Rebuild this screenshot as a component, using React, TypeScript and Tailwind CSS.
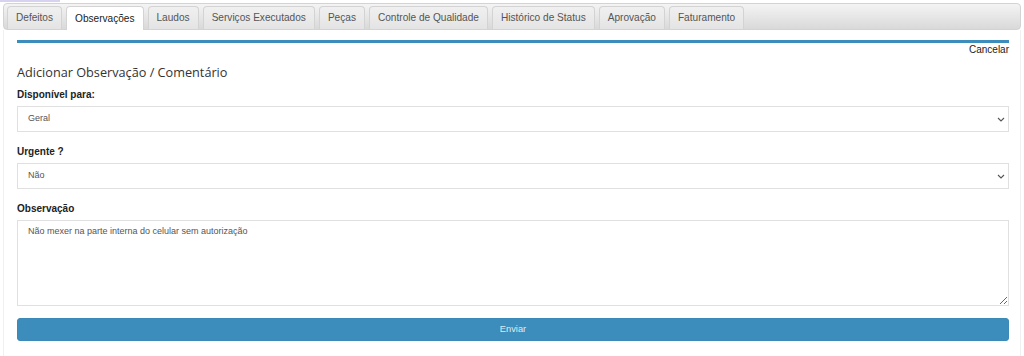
import { useState } from "react"

const tabs = [
  "Defeitos",
  "Observações",
  "Laudos",
  "Serviços Executados",
  "Peças",
  "Controle de Qualidade",
  "Histórico de Status",
  "Aprovação",
  "Faturamento",
]

function Chevron() {
  return (
    <svg width="8" height="5" viewBox="0 0 8 5" className="pointer-events-none absolute right-[4px] top-[11px]">
      <path d="M1 1l3 3 3-3" fill="none" stroke="#555" strokeWidth="1.1" />
    </svg>
  )
}

export default function App() {
  const [active, setActive] = useState("Observações")
  const [disp, setDisp] = useState("Geral")
  const [urg, setUrg] = useState("Não")
  const [obs, setObs] = useState("Não mexer na parte interna do celular sem autorização")

  return (
    <div className="h-[356px] bg-white font-['Liberation_Sans',Arial,sans-serif] text-[#333] overflow-hidden">
      <div className="h-[2px] w-[60px] bg-[#d6d2f0]" />
      <div className="px-[3px] pt-px">
        <ul className="flex items-end gap-[4px] h-[27px] px-[3px] border border-[#d3d3d3] rounded-[4px] bg-gradient-to-b from-[#f4f4f4] to-[#d9d9d9]">
          {tabs.map(t => (
            <li key={t}
              onClick={() => setActive(t)}
              className={
                t === active
                  ? "h-[24px] -mb-px px-[8px] flex items-center border border-b-0 border-[#d3d3d3] rounded-t-[4px] bg-white text-[10.1px] text-[#212121] cursor-pointer"
                  : "h-[23px] px-[8px] flex items-center border border-b-0 border-[#d3d3d3] rounded-t-[4px] bg-gradient-to-b from-[#f0f0f0] to-[#e4e4e4] text-[10.1px] text-[#555] cursor-pointer"
              }>
              {t}
            </li>
          ))}
        </ul>

        <div className="border-x border-[#f0f0f0] pl-[13px] pr-[11px] pt-[10px] h-[330px]">
          <div className="h-[3px] bg-[#3c8dbc]" />
          <div className="flex justify-end">
            <a className="text-[10px] text-[#222] leading-[14px] cursor-pointer">Cancelar</a>
          </div>

          <h3 className="mt-[6px] font-['Open_Sans',sans-serif] text-[12.7px] leading-[18px] text-[#333]">
            Adicionar Observação / Comentário
          </h3>

          <label className="block mt-[7px] text-[10px] font-bold leading-[14px] text-[#222]">Disponível para:</label>
          <div className="relative mt-[4px]">
            <select value={disp} onChange={e => setDisp(e.target.value)}
              className="block w-full h-[26px] appearance-none border border-[#e0e0e0] bg-white pl-[10px] pr-[16px] text-[9px] text-[#555] outline-none">
              <option>Geral</option>
              <option>Técnico</option>
              <option>Cliente</option>
            </select>
            <Chevron />
          </div>

          <label className="block mt-[13px] text-[10px] font-bold leading-[14px] text-[#222]">Urgente ?</label>
          <div className="relative mt-[4px]">
            <select value={urg} onChange={e => setUrg(e.target.value)}
              className="block w-full h-[26px] appearance-none border border-[#e0e0e0] bg-white pl-[10px] pr-[16px] text-[9px] text-[#555] outline-none">
              <option>Não</option>
              <option>Sim</option>
            </select>
            <Chevron />
          </div>

          <label className="block mt-[13px] text-[10px] font-bold leading-[14px] text-[#222]">Observação</label>
          <textarea value={obs} onChange={e => setObs(e.target.value)}
            className="block w-full mt-[4px] h-[86px] border border-[#e0e0e0] bg-white px-[10px] py-[3px] text-[9px] leading-[14px] text-[#555] outline-none" />

          <button className="block w-full mt-[12px] h-[23px] rounded-[3px] bg-[#3c8dbc] border border-[#3a89b6] text-[9.3px] text-[#dcebf5]">
            Enviar
          </button>
        </div>
      </div>
    </div>
  )
}
